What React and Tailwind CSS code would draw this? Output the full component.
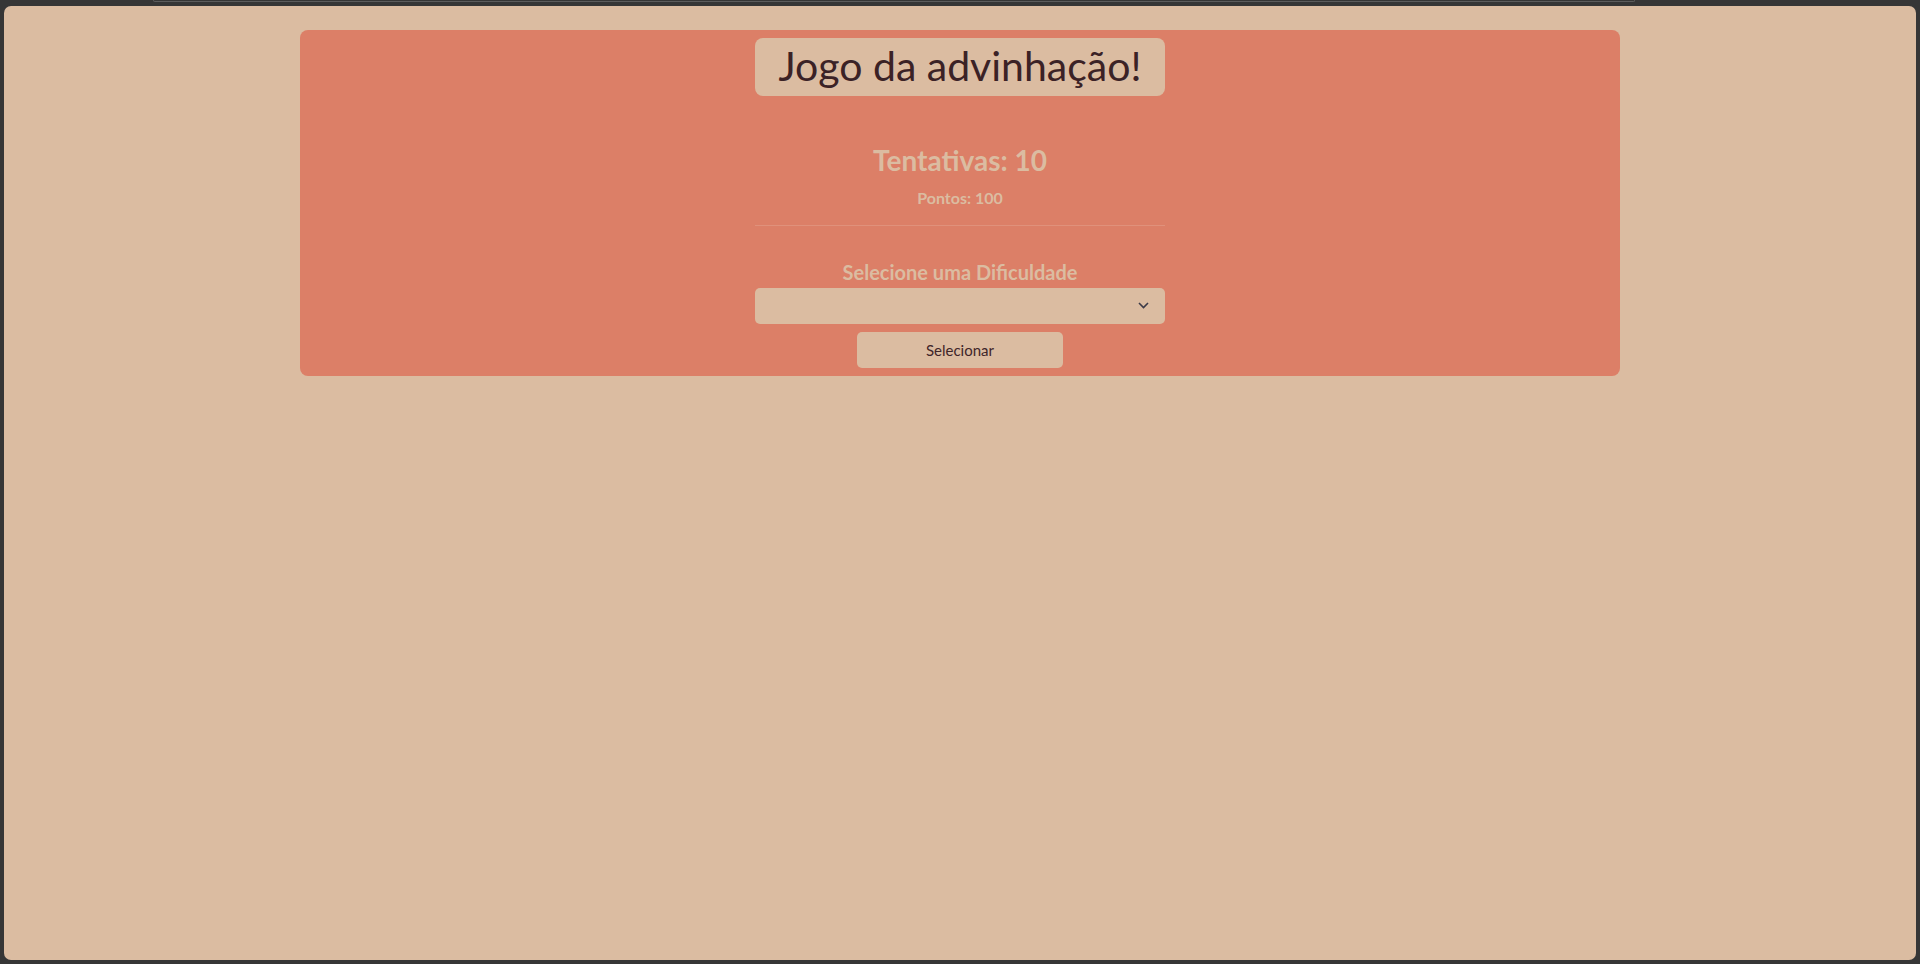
import { useState } from "react";

export default function App() {
  const [tentativas] = useState(10);
  const [pontos] = useState(100);
  const [dificuldade, setDificuldade] = useState("");

  return (
    <div className="min-h-screen h-[964px] bg-[#363636] flex flex-col font-['Lato',sans-serif]">
      <div className="ml-[153px] mr-[285px] h-[2px] border-b border-x border-[#5c5c5c] rounded-b-[3px]"></div>
      <div className="flex-1 mt-[4px] mx-[4px] mb-[4px] bg-[#dbbca1] rounded-[7px] pt-[24px]">
        <div className="mx-auto w-[1320px] bg-[#dc7f67] rounded-[8px] pt-[8px] pb-[8px] flex flex-col items-center">
          <div className="w-[410px] flex flex-col items-center">
            <h1 className="w-full h-[58px] bg-[#dbbca1] rounded-[8px] text-[#3b2226] text-[41px] leading-[56px] text-center">
              Jogo da advinhação!
            </h1>
            <h2 className="mt-[47px] text-[28px] leading-[34px] font-bold text-[#dbbca1]">
              Tentativas: {tentativas}
            </h2>
            <p className="mt-[11px] text-[16px] leading-[20px] font-bold text-[#dbbca1]">
              Pontos: {pontos}
            </p>
            <div className="w-full mt-[17px] h-px bg-[#e0917b]"></div>
            <label
              htmlFor="dificuldade"
              className="mt-[34px] text-[20px] leading-[24px] font-bold text-[#dbbca1]"
            >
              Selecione uma Dificuldade
            </label>
            <div className="relative w-full mt-[4px]">
              <select
                id="dificuldade"
                value={dificuldade}
                onChange={(e) => setDificuldade(e.target.value)}
                className="appearance-none w-full h-[36px] bg-[#dbbca1] rounded-[5px] px-3 text-[#3f2529] outline-none"
              >
                <option value=""></option>
                <option value="facil">Fácil</option>
                <option value="medio">Médio</option>
                <option value="dificil">Difícil</option>
              </select>
              <svg
                className="absolute right-[16px] top-[14px] pointer-events-none"
                width="11"
                height="7"
                viewBox="0 0 11 7"
                fill="none"
              >
                <path d="M1 1l4.5 4.5L10 1" stroke="#3b3a48" strokeWidth="1.6" />
              </svg>
            </div>
            <button className="mt-[8px] w-[206px] h-[36px] bg-[#dbbca1] rounded-[5px] text-[#3f2529] text-[15px]">
              Selecionar
            </button>
          </div>
        </div>
      </div>
    </div>
  );
}
